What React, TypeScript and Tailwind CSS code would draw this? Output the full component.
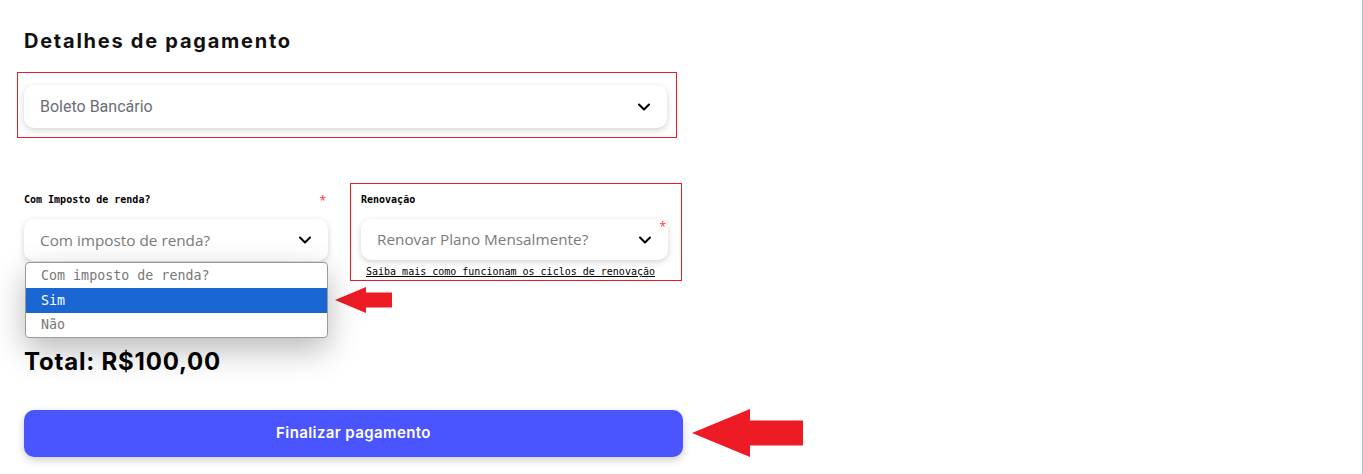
import React from "react";
import { ChevronDown } from "lucide-react";

const mono = { fontFamily: '"DejaVu Sans Mono", "Liberation Mono", monospace' };

function LeftArrow({ className, w, h, body }: { className: string; w: number; h: number; body: number }) {
  const headW = Math.round(h * 1.2);
  const top = (h - body) / 2;
  return (
    <svg className={className} width={w} height={h} viewBox={`0 0 ${w} ${h}`}>
      <polygon
        points={`0,${h / 2} ${headW},0 ${headW},${top} ${w},${top} ${w},${top + body} ${headW},${top + body} ${headW},${h}`}
        fill="#ed1c24"
      />
    </svg>
  );
}

export default function App() {
  return (
    <div className="relative min-h-[474px] w-[1363px] bg-white overflow-hidden" style={{ fontFamily: '"Open Sans", sans-serif' }}>
      <div className="absolute right-0 top-0 h-full w-px bg-[#b4c6d6]" />
      <div className="px-6 pt-[29px] w-[720px]">
        <h2 className="text-[20px] font-bold text-[#111] leading-6 tracking-[1.75px]" style={{ fontFamily: 'Inter, sans-serif' }}>
          Detalhes de pagamento
        </h2>

        <div className="mt-[19px] -ml-[7px] w-[660px] border border-[#ed1c24] pl-[6px] pr-[9px] pt-[12px] pb-[9px]">
          <div className="flex h-[43px] items-center justify-between rounded-[10px] bg-white pl-4 pr-[13px] shadow-[0_2px_6px_rgba(0,0,0,0.18)]">
            <span className="text-[16px] text-[#6b6e76]" style={{ fontFamily: 'Roboto, sans-serif' }}>Boleto Bancário</span>
            <ChevronDown size={20} strokeWidth={2.4} className="text-black" />
          </div>
        </div>

        <div className="mt-[45px] flex items-start">
          <div className="relative w-[304px] shrink-0 pt-[11px]">
            <div className="flex items-start justify-between">
              <span className="text-[10px] font-bold leading-3 text-black" style={mono}>Com Imposto de renda?</span>
              <span className="mr-[2px] mt-[1px] text-[12px] leading-3 text-[#ff3333]">*</span>
            </div>
            <div className="mt-[12px] flex h-[42px] items-center justify-between rounded-[10px] bg-white pl-4 pr-[13px] shadow-[0_2px_6px_rgba(0,0,0,0.18)]">
              <span className="text-[15.3px] text-[#7a7a7a]">Com imposto de renda?</span>
              <ChevronDown size={20} strokeWidth={2.4} className="text-black" />
            </div>
            <div
              className="absolute left-px top-[79px] z-10 w-[303px] overflow-hidden rounded-[4px] border border-[#9a9a9a] bg-white shadow-[0_12px_32px_rgba(0,0,0,0.28)]"
              style={mono}
            >
              <div className="flex h-[25px] items-center px-[15px] text-[13.33px] text-[#777]">Com imposto de renda?</div>
              <div className="flex h-[25px] items-center px-[15px] text-[13.33px] text-white bg-[#1a66d2]">Sim</div>
              <div className="flex h-[24px] items-center px-[15px] text-[13.33px] text-[#777]">Não</div>
            </div>
            <LeftArrow className="absolute left-[311px] top-[104px]" w={57} h={26} body={15} />
          </div>

          <div className="ml-[22px] w-[332px] shrink-0 border border-[#ed1c24] pl-[10px] pr-[13px] pt-[10px] pb-[2px]">
            <span className="block text-[10px] font-bold leading-3 text-black" style={mono}>Renovação</span>
            <div className="relative mt-[13px] flex h-[41px] items-center justify-between rounded-[10px] bg-white pl-4 pr-[13px] shadow-[0_2px_6px_rgba(0,0,0,0.18)]">
              <span className="text-[15.3px] text-[#7a7a7a]">Renovar Plano Mensalmente?</span>
              <ChevronDown size={20} strokeWidth={2.4} className="text-black" />
              <span className="absolute right-[2px] top-[2px] text-[12px] leading-3 text-[#ff3333]">*</span>
            </div>
            <a className="ml-[5px] mt-[6px] block text-[10px] leading-3 text-black underline" style={mono}>
              Saiba mais como funcionam os ciclos de renovação
            </a>
          </div>
        </div>

        <div className="mt-[67px] text-[24px] font-bold leading-7 tracking-[0.8px] text-black" style={{ fontFamily: 'Inter, sans-serif' }}>
          Total: R$100,00
        </div>

        <div className="relative mt-[34px] w-[659px]">
          <button className="flex h-[47px] w-full items-center justify-center rounded-[10px] bg-[#4b55ff] text-[15px] font-semibold tracking-[0.4px] text-white shadow-[0_3px_8px_rgba(0,0,0,0.2)]" style={{ fontFamily: 'Inter, sans-serif' }}>
            Finalizar pagamento
          </button>
          <LeftArrow className="absolute left-[668px] top-[-1px]" w={111} h={48} body={25} />
        </div>
      </div>
    </div>
  );
}
